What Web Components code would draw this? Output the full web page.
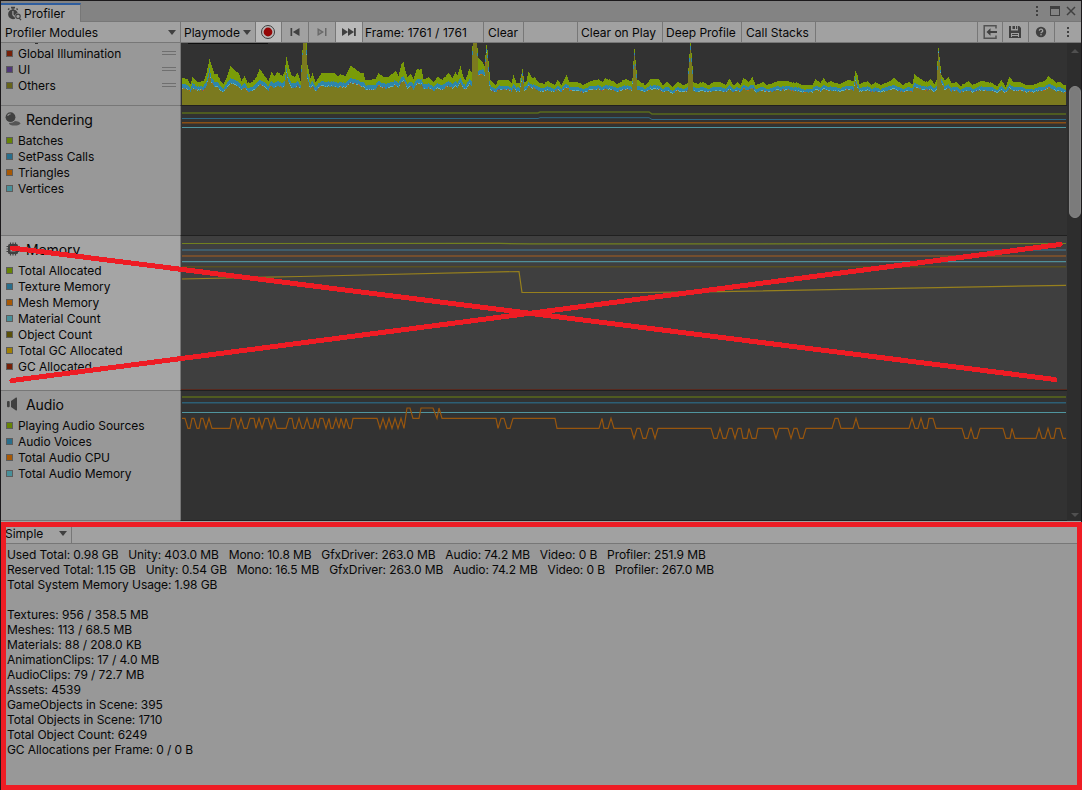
<!DOCTYPE html>
<html lang="en">
<head>
<meta charset="utf-8">
<title>Profiler</title>
<style>
    html, body {
        margin: 0;
        height: 100%;
        overflow: hidden;
        background: #1b191b;
    }

    body {
        font-family: Inter, "Liberation Sans", sans-serif;
        font-size: 12px;
        color: #070707;
    }
</style>
</head>
<body>
<profiler-window></profiler-window>

<script>
/**
 * Icons, all drawn on a 16x16 grid
 */
const ICONS = {
    profiler: `
        <path d="M5 .8h4v1.600H5zM6.400 2h1.200v2H6.400zM1.600 3.200l1.200-1.200 1 1-1.200 1.200zM11 2l1.200 1.200-1 1L10 3z"/>
        <path fill-rule="evenodd" d="M7 3.400a4.900 4.900 0 0 0 0 9.800c.8 0 1.500-.2 2.200-.5A3.600 3.600 0 0 1 11.700 7 4.900 4.900 0 0 0 7 3.400zM6.300 5h1.200v3.400l1.600 1.600-1 1-1.800-2z"/>
        <circle cx="12" cy="10.300" r="2.200" fill="none" stroke="#404040" stroke-width="1.100"/>
        <path d="M12.700 12.600l.9-.8 1.900 2-.9.8z"/>`,
    rendering: `
        <ellipse cx="9.600" cy="12.300" rx="5.600" ry="2.300" fill="#555"/>
        <circle cx="5.500" cy="6.200" r="5.600" fill="#9a9a9a"/>
        <circle cx="5.500" cy="6.200" r="4.900"/>
        <path d="M2.600 4.800a3 3 0 0 1 3-1.800" fill="none" stroke="#999" stroke-width="1.200"/>`,
    memory: `
        <path d="M5.500 1.500v13M8 1.500v13M10.500 1.500v13M1.500 5.500h13M1.500 8h13M1.500 10.500h13" fill="none" stroke="#404040" stroke-width="1.200"/>
        <rect x="3" y="3" width="10" height="10" rx="1.500"/>
        <rect x="5.500" y="5.500" width="5" height="5" fill="#999"/>`,
    audio: `
        <rect x="2" y="5" width="2.700" height="6.200" rx="1"/>
        <path d="M6 5l5-3.400q1-.4 1 .6v11.600q0 1-1 .6L6 11z"/>`,
    record: `
        <circle cx="8" cy="8" r="6.500" fill="none" stroke="#3c3c3c" stroke-width="1"/>
        <circle cx="8" cy="8" r="4.400" fill="#940606"/>`,
    first: `<path d="M3.500 4H5.200v8H3.500zM12.500 4v8L5.800 8z"/>`,
    next: `<path d="M3.500 4v8L10 8zM11 4h1.500v8H11z" fill="#686868"/><path d="M4.800 6.300v3.400L7.600 8z" fill="#8a8a8a"/>`,
    last: `<path d="M1 4v8l6-4zM7 4v8l6-4zM13 4h1.800v8H13z"/>`,
    load: `
        <path d="M14 4.500V1.700H2.200v12.600H14v-2.800" fill="none" stroke="#525252" stroke-width="1.500"/>
        <path d="M4.500 8l4-3.700v2.800H15v1.800H8.500v2.800z"/>`,
    save: `
        <path fill-rule="evenodd" d="M2 2h2v4.500h7V2h1.200L14 4v10H2zM4 9h8v4H4z"/>
        <path d="M5.500 2H8v3H5.500zM9 2h1.200v3H9zM5 10h6v1H5zM5 12h6v1H5z"/>`,
    help: `
        <circle cx="8" cy="8" r="5.200"/>
        <path d="M6.300 6.700a1.700 1.600 0 1 1 2.300 1.500q-.6.300-.6 1" fill="none" stroke="#a2a2a2" stroke-width="1.300"/>
        <circle cx="8" cy="10.800" r=".8" fill="#a2a2a2"/>`,
    dots: `<path d="M7 3h2v2H7zM7 7h2v2H7zM7 11h2v2H7z"/>`,
    maximize: `<path fill-rule="evenodd" d="M3 3h10v10H3zM4 6v6h8V6z"/>`,
    close: `<path d="M4 4l8 8M12 4l-8 8" fill="none" stroke="#404040" stroke-width="1.500"/>`
};

class UiIcon extends HTMLElement {
    connectedCallback() {
        const size = this.getAttribute('size') || 16;
        this.attachShadow({ mode: 'open' }).innerHTML = `
            <style>
                :host { display: block; flex: none; width: ${size}px; height: ${size}px; }
                svg { display: block; }
            </style>
            <svg width="${size}" height="${size}" viewBox="0 0 16 16" fill="#404040">${ICONS[this.getAttribute('name')]}</svg>
        `;
    }
}
customElements.define('ui-icon', UiIcon);

/**
 * One toolbar segment. Attributes: w, lit, arrow, center
 */
class ToolCell extends HTMLElement {
    connectedCallback() {
        this.attachShadow({ mode: 'open' }).innerHTML = `
            <style>
                :host {
                    display: flex;
                    align-items: center;
                    flex: none;
                    box-sizing: border-box;
                    width: ${this.getAttribute('w')}px;
                    padding-left: 4px;
                    border-right: 1px solid #777;
                    white-space: nowrap;
                    background: #a1a1a1;
                }
                :host([center]) { justify-content: center; padding: 0 1px 0 0; }
                :host([lit]) { background: #bababa; }
                :host([grow]) { flex: 1; }
                i {
                    margin: 0 4px 0 auto;
                    border: 4px solid transparent;
                    border-top: 5px solid #404040;
                    border-bottom: 0;
                }
            </style>
            <slot></slot>${this.hasAttribute('arrow') ? '<i></i>' : ''}
        `;
    }
}
customElements.define('tool-cell', ToolCell);

class LegendRow extends HTMLElement {
    connectedCallback() {
        this.attachShadow({ mode: 'open' }).innerHTML = `
            <style>
                :host { display: flex; align-items: center; flex: none; height: 16px; padding: 0 4px 0 5px; letter-spacing: -.04px; }
                .swatch { width: 5px; height: 5px; border: 1px solid #5c5c5c; background: ${this.getAttribute('color')}; margin-right: 5px; }
                .grip { margin-left: auto; width: 14px; height: 2px; border: solid #6f6f6f; border-width: 1px 0; }
            </style>
            <span class="swatch"></span><slot></slot>
            ${this.hasAttribute('grip') ? '<span class="grip"></span>' : ''}
        `;
    }
}
customElements.define('legend-row', LegendRow);

/**
 * Module strip: legend on the left, chart on the right
 */
class ProfilerModule extends HTMLElement {
    connectedCallback() {
        const label = this.getAttribute('label');
        const head = label ? `<header><ui-icon name="${this.getAttribute('icon')}"></ui-icon><span>${label}</span></header>` : '<span class="cut"></span>';

        this.attachShadow({ mode: 'open' }).innerHTML = `
            <style>
                :host { display: flex; flex: none; height: ${this.getAttribute('h')}px; --side: #989898; --plot: #323232; }
                :host([selected]) { --side: #a5a5a5; --plot: #3f3f3f; }
                aside {
                    display: flex;
                    flex-direction: column;
                    width: 179px;
                    box-sizing: border-box;
                    overflow: hidden;
                    background: var(--side);
                    border-bottom: 1px solid #777;
                }
                header { display: flex; align-items: center; flex: none; height: 26px; gap: 5px; padding-left: 4px; font-size: 14px; letter-spacing: -.1px; }
                /* tail of the legend row that is scrolled out */
                .cut { flex: none; width: 3px; height: 1px; margin: 0 0 1px 34px; background: #333; }
                .plot {
                    flex: 1;
                    box-sizing: border-box;
                    border-left: 1px solid #777;
                    border-bottom: 1px solid #202020;
                    background: var(--plot);
                }
                ::slotted(line-chart), ::slotted(frame-chart) { display: block; }
            </style>
            <aside>${head}<slot></slot></aside>
            <div class="plot"><slot name="chart"></slot></div>
        `;
    }
}
customElements.define('profiler-module', ProfilerModule);

/**
 * Polyline chart. Points are in window coordinates, the viewBox moves them in place.
 */
class LineChart extends HTMLElement {
    connectedCallback() {
        const top = Number(this.getAttribute('top'));
        const h = Number(this.getAttribute('h'));
        const lines = SERIES[this.getAttribute('series')].map(([color, points, width]) =>
            `<polyline points="${points}" stroke="${color}" stroke-width="${width || 1}"/>`).join('');

        this.attachShadow({ mode: 'open' }).innerHTML = `
            <style>
                :host { height: ${h}px; }
                svg { display: block; }
            </style>
            <svg width="885" height="${h}" viewBox="181 ${top} 885 ${h}" fill="none">${lines}</svg>
        `;
    }
}

const flat = (y) => `182,${y} 1066,${y}`;

// Audio CPU steps: level followed by the x range where it holds
const LEVELS = { t: 408, h: 418.3, m: 428.3, l: 438.3 };
const AUDIO_CPU = `h182-185 m188-190 h192-194 m197-199 h201-203 m206-206 h209-209 m212-230 h232-235 m238-238
    h241-241 m244-247 h250-254 m256-256 h259-259 m262-262 h265-268 m271-271 h274-274 m277-286 h289-292
    m294-296 h299-299 m302-304 h307-307 m310-313 h315-315 m318-318 h320-323 m326-326 h329-329 m331-333
    h336-336 m339-339 h341-341 m344-344 h346-346 m349-351 h353-377
    m380-380 h383-383 m386-386 h389-389 m392-392 h395-395 m398-398 h401-401 m404-404 t407-410 h413-419
    t421-433 h437-437 t439-439 h442-496 m498-498 h501-504 m507-510 h513-555 m557-599 h602-602 m604-608
    h611-611 m614-631 l634-634 m637-640 l643-646 m649-652 l655-655 m658-711 l714-717 m720-720 l723-726
    m729-732 l735-735 m738-741 l743-747 m749-749 l752-756 m758-773 l776-776 m779-788 l791-791 m794-797
    l800-803 m806-832 h835-838 m841-853 h856-856 m859-909 h912-912 m915-918 h921-921 m924-927 h929-933
    m936-962 l965-968 m971-971 l974-977 m980-1003 l1006-1010 m1012-1012 l1015-1036 m1039-1039 l1042-1045
    m1048-1048 l1051-1054 m1056-1060 l1063-1066`
    .split(/\s+/)
    .map((step) => {
        const y = LEVELS[step[0]];
        const [from, to] = step.slice(1).split('-');
        return `${from},${y} ${to},${y}`;
    })
    .join(' ');

const SERIES = {
    rendering: [
        ['#5a6b1c', '182,113 538,113 540,112 649,112 652,114 1066,114', 1.5],
        ['#2f6a85', '182,118.500 538,118.500 540,117.700 649,117.700 652,119.500 1066,119.500'],
        ['#8a4f16', flat(122.8), 1.5],
        ['#50959f', flat(127.5)]
    ],
    memory: [
        ['#72801f', '182,243.500 500,243.400 530,243.900 700,243.900 900,243.600 1066,243.500', 1.2],
        ['#3f5c6b', flat(250), 2],
        ['#87542a', flat(256), 1.6],
        ['#508f99', flat(261.6), 1.2],
        ['#595021', flat(266.8), 1.6],
        ['#97801d', '182,279 300,276.500 519,271.500 522,292.500 640,292.500 720,291.700 1066,285.300', 1.2]
    ],
    audio: [
        ['#5b6a1b', flat(397.1), 1.5],
        ['#2d5f75', flat(402.8), 1.4],
        ['#50959f', flat(412.5)],
        ['#98560e', AUDIO_CPU, 1.2]
    ]
};
customElements.define('line-chart', LineChart);

/**
 * CPU frame times, one column per pixel
 */
class FrameChart extends HTMLElement {
    // x, top of the stack, and the top of "Others" where it leaves the usual ratio
    static points = [
        [182, 78], [187, 79], [190, 84], [192, 77], [197, 82], [203, 81], [206, 73], [209, 59, 73], [211, 65], [214, 74], [217, 74],
        [220, 81], [223, 84], [226, 78], [230, 66], [234, 70], [238, 73], [241, 81], [244, 76], [247, 83], [252, 82], [256, 77],
        [259, 69], [262, 73], [268, 81], [271, 72], [274, 76], [277, 72], [282, 76], [284, 72], [286, 57, 73], [288, 65],
        [291, 75], [294, 77], [297, 73], [300, 81, 88], [302, 50, 55], [303, 30, 30], [305, 30, 30], [306, 43, 55], [307, 65, 78],
        [309, 74], [310, 78], [312, 73], [315, 82], [321, 73], [334, 73], [337, 76], [340, 74], [345, 76], [350, 66], [355, 69],
        [360, 73], [363, 73], [365, 80], [375, 79], [378, 73], [383, 77], [388, 77], [395, 71], [398, 76], [401, 64], [403, 62],
        [405, 71], [407, 77], [410, 74], [413, 79], [416, 70], [421, 69], [423, 79], [428, 77], [433, 82], [437, 77], [442, 80],
        [448, 73], [452, 78], [455, 72], [457, 75], [460, 66], [463, 77], [465, 80], [469, 69], [471, 72], [472, 46, 55],
        [473, 30, 30], [476, 30, 30], [477, 48, 55], [478, 58, 75], [482, 62, 74], [484, 66, 76], [485, 55, 63], [486, 45, 53], [487, 50, 58],
        [489, 72], [490, 80], [495, 85], [498, 80], [508, 80], [511, 83], [513, 75], [516, 83], [519, 83], [522, 69, 77],
        [524, 82], [526, 81], [528, 72], [532, 78], [534, 77], [538, 82], [543, 84], [548, 81], [554, 85], [557, 80],
        [561, 85], [566, 75], [569, 82], [577, 82], [583, 85], [590, 81], [598, 79], [602, 82], [605, 78], [612, 81],
        [617, 84], [625, 79], [631, 81], [632, 78, 84], [633, 61, 69], [634, 49, 56], [635, 60, 66], [637, 80], [640, 82], [645, 85],
        [650, 79], [658, 79], [662, 85], [667, 82], [672, 87], [677, 82], [683, 85], [687, 83], [688, 68, 74], [690, 40, 50],
        [692, 66, 74], [693, 82], [697, 84], [702, 82], [708, 85], [713, 82], [720, 82], [725, 85], [729, 79], [733, 85],
        [737, 82], [740, 85], [743, 78], [748, 82], [752, 77], [755, 85], [762, 82], [767, 85], [778, 81], [788, 81],
        [792, 83], [796, 82], [802, 85], [812, 85], [815, 79], [820, 83], [823, 78], [827, 83], [830, 81], [840, 84],
        [848, 80], [853, 81], [855, 71, 81], [857, 75], [859, 84], [867, 81], [871, 85], [875, 82], [880, 85], [887, 82],
        [894, 78], [898, 82], [903, 85], [908, 82], [912, 84], [914, 74], [917, 77], [922, 80], [927, 82], [930, 79],
        [934, 84], [936, 80], [937, 61, 70], [938, 48, 53], [939, 57, 62], [941, 75, 82], [944, 80], [948, 77], [951, 83], [956, 82],
        [960, 86], [968, 81], [972, 85], [980, 81], [992, 83], [997, 86], [1001, 80], [1005, 87], [1009, 77], [1013, 82],
        [1020, 82], [1025, 85], [1033, 85], [1040, 82], [1044, 81], [1048, 76], [1052, 79], [1056, 83], [1060, 82],
        [1063, 85], [1066, 85]
    ].map(([x, top, base]) => [x, top, base || 92 - (85 - top) * 0.5]);

    connectedCallback() {
        this.attachShadow({ mode: 'open' }).innerHTML = `
            <style>canvas { display: block; }</style>
            <canvas width="885" height="62"></canvas>
        `;
        this.draw(this.shadowRoot.querySelector('canvas').getContext('2d'));
    }

    draw(ctx) {
        let seed = 7;
        const random = () => {
            seed = (seed * 16807) % 2147483647;
            return seed / 2147483647;
        };
        const fill = (color, x, y, h) => {
            ctx.fillStyle = color;
            ctx.fillRect(x - 181, Math.round(y) - 43, 1, h);
        };
        const points = FrameChart.points;
        let i = 0;

        for (let x = 182; x < 1066; x++) {
            while (x > points[i + 1][0]) i++;
            const [x0, top0, base0] = points[i];
            const [x1, top1, base1] = points[i + 1];
            const t = (x - x0) / (x1 - x0);
            const top = top0 + (top1 - top0) * t + (random() - 0.5) * 0.8;
            const base = Math.round(base0 + (base1 - base0) * t + random() * 0.8);
            const blue = Math.min(x < 500 ? 5 : 4, Math.max(1, (base - top) * 0.45));

            fill('#7a9c08', x, top, 100);
            fill('#2f86a9', x, base - blue, 100);
            fill('#7b7a1f', x, base, 100);

            const r = random();
            if (r < 0.42) fill('#5eb3bd', x, base - 1, 1);
            else if (r < 0.58) fill('#c4660f', x, base - 1, 1);
            else if (r < 0.64) fill('#67517a', x, base - 1, 1);
        }

        // lower edge of the scrolled-out frame time label
        ctx.fillStyle = '#0e0e0e';
        ctx.fillRect(7, 0, 80, 1);
    }
}
customElements.define('frame-chart', FrameChart);

class ScrollTrack extends HTMLElement {
    connectedCallback() {
        this.attachShadow({ mode: 'open' }).innerHTML = `
            <style>
                :host {
                    display: flex;
                    flex-direction: column;
                    align-items: center;
                    flex: none;
                    box-sizing: border-box;
                    width: 14px;
                    padding: 6px 0 4px 1px;
                    background: #2d2d2d;
                }
                .up, .down { border: 4px solid transparent; }
                .up { border-top: 0; border-bottom: 4px solid #505050; margin-bottom: 33px; }
                .down { border-bottom: 0; border-top: 4px solid #505050; margin-top: auto; }
                .thumb { box-sizing: border-box; width: 12px; height: 132px; border-radius: 6px; background: #7b7b7b; border: 1px solid #868686; }
            </style>
            <span class="up"></span><span class="thumb"></span><span class="down"></span>
        `;
    }
}
customElements.define('scroll-track', ScrollTrack);

class StatsPanel extends HTMLElement {
    connectedCallback() {
        this.attachShadow({ mode: 'open' }).innerHTML = `
            <style>
                :host { display: flex; flex-direction: column; flex: 1; background: #989898; }
                .bar { display: flex; box-sizing: border-box; height: 23px; padding-top: 3px; background: #a1a1a1; border-bottom: 1px solid #777; }
                pre { margin: 0; padding: 3px 6px; font: inherit; line-height: 15px; letter-spacing: -.09px; }
            </style>
            <div class="bar"><slot name="mode"></slot></div>
            <pre><slot></slot></pre>
        `;
    }
}
customElements.define('stats-panel', StatsPanel);

/**
 * Red marker strokes over the window
 */
class MarkerLayer extends HTMLElement {
    connectedCallback() {
        this.attachShadow({ mode: 'open' }).innerHTML = `
            <style>
                :host { position: absolute; inset: 0; pointer-events: none; }
                svg { display: block; }
            </style>
            <svg width="1082" height="790" fill="none" stroke="#ee1c24" stroke-width="5" shape-rendering="crispEdges">
                <path d="M12 248L1055 379.500M12 380.500L1060 244.500" stroke-linecap="round"/>
                <path d="M3.500 524.500H1079.500V787.500H3.500z"/>
            </svg>
        `;
    }
}
customElements.define('marker-layer', MarkerLayer);

class ProfilerWindow extends HTMLElement {
    connectedCallback() {
        this.attachShadow({ mode: 'open' }).innerHTML = `
            <style>
                :host {
                    display: flex;
                    flex-direction: column;
                    position: relative;
                    box-sizing: border-box;
                    width: 1082px;
                    height: 790px;
                    padding: 1px 1px 0;
                    background: #1b191b;
                }
                .tabs { display: flex; height: 20px; background: #838383; border-bottom: 1px solid #777; }
                .tab {
                    display: flex;
                    align-items: center;
                    box-sizing: border-box;
                    width: 80px;
                    height: 19px;
                    gap: 2px;
                    margin-top: 2px;
                    padding-left: 5px;
                    border-top: 2px solid #2e5d9e;
                    border-right: 1px solid #777;
                    background: #a1a1a1;
                }
                .controls { display: flex; align-items: center; margin-left: auto; padding-right: 2px; }
                .controls ui-icon:first-child { margin-right: 2px; }
                .toolbar { display: flex; height: 20px; background: #a1a1a1; border-bottom: 1px solid #777; }
                .body { display: flex; height: 478px; }
                .modules { flex: 1; background: #323232; }
            </style>

            <div class="tabs">
                <div class="tab"><ui-icon name="profiler"></ui-icon><span>Profiler</span></div>
                <div class="controls">
                    <ui-icon name="dots"></ui-icon>
                    <ui-icon name="maximize"></ui-icon>
                    <ui-icon name="close"></ui-icon>
                </div>
            </div>

            <div class="toolbar">
                <tool-cell w="180" arrow>Profiler Modules</tool-cell>
                <tool-cell w="75" arrow style="padding-left:3px">Playmode</tool-cell>
                <tool-cell w="26" center lit><ui-icon name="record"></ui-icon></tool-cell>
                <tool-cell w="27" center><ui-icon name="first"></ui-icon></tool-cell>
                <tool-cell w="27" center><ui-icon name="next"></ui-icon></tool-cell>
                <tool-cell w="27" center lit><ui-icon name="last"></ui-icon></tool-cell>
                <tool-cell w="121" style="padding-left:2px;letter-spacing:.05px">Frame: 1761 / 1761</tool-cell>
                <tool-cell w="40">Clear</tool-cell>
                <tool-cell w="54"></tool-cell>
                <tool-cell w="85" style="padding-left:3px">Clear on Play</tool-cell>
                <tool-cell w="79" style="padding-left:3px">Deep Profile</tool-cell>
                <tool-cell w="74">Call Stacks</tool-cell>
                <tool-cell grow></tool-cell>
                <tool-cell w="25" center><ui-icon name="load"></ui-icon></tool-cell>
                <tool-cell w="26" center><ui-icon name="save"></ui-icon></tool-cell>
                <tool-cell w="26" center><ui-icon name="help"></ui-icon></tool-cell>
                <tool-cell w="26" center style="border:0"><ui-icon name="dots"></ui-icon></tool-cell>
            </div>

            <div class="body">
                <div class="modules">
                    <profiler-module h="63">
                        <legend-row color="#762008" grip>Global Illumination</legend-row>
                        <legend-row color="#503878" grip>UI</legend-row>
                        <legend-row color="#66641a" grip>Others</legend-row>
                        <frame-chart slot="chart"></frame-chart>
                    </profiler-module>
                    <profiler-module h="130" label="Rendering" icon="rendering">
                        <legend-row color="#668404">Batches</legend-row>
                        <legend-row color="#286e8c">SetPass Calls</legend-row>
                        <legend-row color="#a85804">Triangles</legend-row>
                        <legend-row color="#48909a">Vertices</legend-row>
                        <line-chart slot="chart" series="rendering" top="106" h="129"></line-chart>
                    </profiler-module>
                    <profiler-module h="155" label="Memory" icon="memory" selected>
                        <legend-row color="#668404">Total Allocated</legend-row>
                        <legend-row color="#286e8c">Texture Memory</legend-row>
                        <legend-row color="#a85804">Mesh Memory</legend-row>
                        <legend-row color="#48909a">Material Count</legend-row>
                        <legend-row color="#5a5008">Object Count</legend-row>
                        <legend-row color="#a08004">Total GC Allocated</legend-row>
                        <legend-row color="#762008">GC Allocated</legend-row>
                        <line-chart slot="chart" series="memory" top="236" h="153" style="border-bottom:1px solid #57291f"></line-chart>
                    </profiler-module>
                    <profiler-module h="130" label="Audio" icon="audio">
                        <legend-row color="#668404">Playing Audio Sources</legend-row>
                        <legend-row color="#286e8c">Audio Voices</legend-row>
                        <legend-row color="#a85804">Total Audio CPU</legend-row>
                        <legend-row color="#48909a">Total Audio Memory</legend-row>
                        <line-chart slot="chart" series="audio" top="391" h="129"></line-chart>
                    </profiler-module>
                </div>
                <scroll-track></scroll-track>
            </div>

            <stats-panel><tool-cell slot="mode" w="71" arrow>Simple</tool-cell>${[
                'Used Total: 0.98 GB   Unity: 403.0 MB   Mono: 10.8 MB   GfxDriver: 263.0 MB   Audio: 74.2 MB   Video: 0 B   Profiler: 251.9 MB',
                'Reserved Total: 1.15 GB   Unity: 0.54 GB   Mono: 16.5 MB   GfxDriver: 263.0 MB   Audio: 74.2 MB   Video: 0 B   Profiler: 267.0 MB',
                'Total System Memory Usage: 1.98 GB',
                '',
                'Textures: 956 / 358.5 MB',
                'Meshes: 113 / 68.5 MB',
                'Materials: 88 / 208.0 KB',
                'AnimationClips: 17 / 4.0 MB',
                'AudioClips: 79 / 72.7 MB',
                'Assets: 4539',
                'GameObjects in Scene: 395',
                'Total Objects in Scene: 1710',
                'Total Object Count: 6249',
                'GC Allocations per Frame: 0 / 0 B'
            ].join('\n')}</stats-panel>

            <marker-layer></marker-layer>
        `;
    }
}
customElements.define('profiler-window', ProfilerWindow);
</script>
</body>
</html>
